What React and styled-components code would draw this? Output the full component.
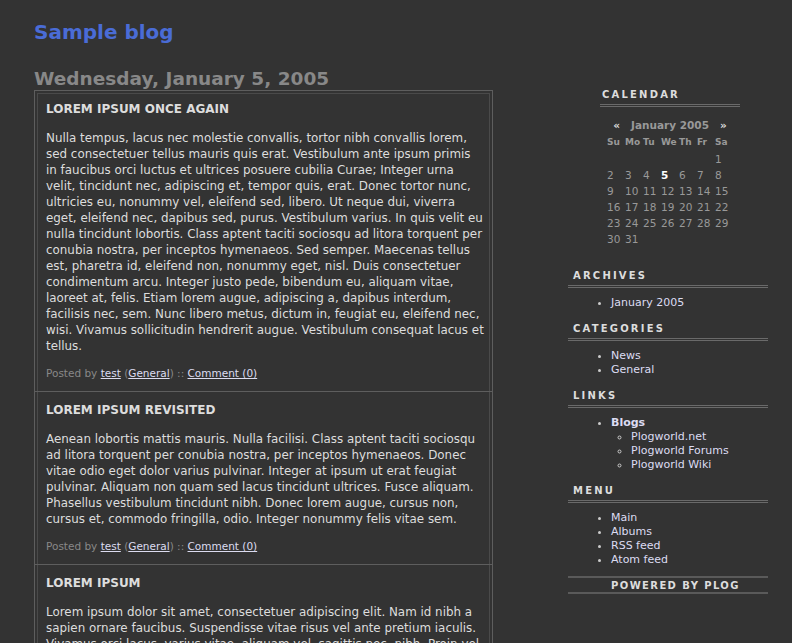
import React from 'react';
import styled, { createGlobalStyle } from 'styled-components';

const GlobalStyle = createGlobalStyle`
  html, body {
    margin: 0;
    padding: 0;
    background: #333333;
  }
  body {
    font-family: 'DejaVu Sans', Verdana, sans-serif;
    color: #dddddd;
  }
`;

const Page = styled.div`
  padding: 18px 0 0 34px;
  width: 734px;
  height: 625px;
  overflow: hidden;
`;

const BlogTitle = styled.h1`
  margin: 0;
  font-size: 20px;
  line-height: 28px;
  font-weight: bold;
  color: #4a6cd6;
`;

const Columns = styled.div`
  display: flex;
  align-items: flex-start;
  gap: 75px;
  margin-top: 22px;
`;

const Main = styled.div`
  width: 459px;
  flex-shrink: 0;
`;

const DateTitle = styled.h2`
  margin: 0;
  font-size: 18.5px;
  line-height: 22px;
  font-weight: bold;
  color: #888888;
`;

const PostList = styled.div`
  border: 1px solid #5e5e5e;
  box-shadow: inset 0 0 0 2px #333, inset 0 0 0 3px #4a4a4a;
`;

const Post = styled.div`
  padding: 10px 8px 10px 11px;
  & + & {
    border-top: 1px solid #5e5e5e;
  }
`;

const PostTitle = styled.h3`
  margin: 0 0 13px;
  font-size: 12px;
  line-height: 16px;
  font-weight: bold;
  text-transform: uppercase;
  color: #dddddd;
`;

const PostBody = styled.p`
  margin: 0 0 11px;
  font-size: 11.9px;
  line-height: 16px;
  color: #dddddd;
`;

const PostMeta = styled.div`
  font-size: 10.5px;
  line-height: 16px;
  color: #888888;
`;

const MetaLink = styled.a`
  color: #dcdcf0;
  text-decoration: underline;
`;

const Sidebar = styled.div`
  width: 200px;
  flex-shrink: 0;
  padding-top: 20px;
`;

const Block = styled.div`
  margin: ${(p) => (p.$narrow ? '0 28px 0 32px' : '22px 0 0')};
`;

const Heading = styled.h4`
  margin: 0;
  padding: 0 0 2px ${(p) => (p.$narrow ? '2px' : '5px')};
  font-size: 10px;
  line-height: 14px;
  font-weight: bold;
  letter-spacing: 2.2px;
  text-transform: uppercase;
  color: #dddddd;
  border-bottom: 3px double #6a6a6a;
`;

const Calendar = styled.table`
  margin: 10px auto 0;
  width: 126px;
  table-layout: fixed;
  border-collapse: collapse;
  font-size: 10.5px;
  color: #999999;
  td, th {
    padding: 0;
    height: 16px;
    text-align: left;
    white-space: nowrap;
  }
  th {
    height: 18px;
    font-size: 9px;
    font-weight: bold;
    color: #999999;
  }
`;

const CalCaption = styled.td`
  text-align: center !important;
  font-weight: bold;
  color: #999999;
`;

const Arrow = styled.span`
  color: #dddddd;
  font-weight: bold;
`;

const Today = styled.td`
  color: #ffffff;
  font-weight: bold;
`;

const LinkList = styled.ul`
  margin: 8px 0 12px;
  padding: 0 0 0 43px;
  font-size: 11px;
  line-height: 14px;
  list-style: disc;
  color: #cccccc;
  ul {
    margin: 0;
    padding-left: 20px;
    list-style: circle;
  }
`;

const Item = styled.li`
  color: #cccccc;
  a {
    color: #dcdcf2;
    text-decoration: none;
    font-weight: ${(p) => (p.$bold ? 'bold' : 'normal')};
  }
  li a {
    font-weight: normal;
  }
`;

const Powered = styled.div`
  margin-top: -3px;
  border-top: 2px solid #5a5a5a;
  border-bottom: 2px solid #5a5a5a;
  padding: 1px 0 0 43px;
  font-size: 10px;
  line-height: 13px;
  font-weight: bold;
  letter-spacing: 1.4px;
  text-transform: uppercase;
  color: #dddddd;
`;

const posts = [
  {
    title: 'Lorem ipsum once again',
    body: 'Nulla tempus, lacus nec molestie convallis, tortor nibh convallis lorem, sed consectetuer tellus mauris quis erat. Vestibulum ante ipsum primis in faucibus orci luctus et ultrices posuere cubilia Curae; Integer urna velit, tincidunt nec, adipiscing et, tempor quis, erat. Donec tortor nunc, ultricies eu, nonummy vel, eleifend sed, libero. Ut neque dui, viverra eget, eleifend nec, dapibus sed, purus. Vestibulum varius. In quis velit eu nulla tincidunt lobortis. Class aptent taciti sociosqu ad litora torquent per conubia nostra, per inceptos hymenaeos. Sed semper. Maecenas tellus est, pharetra id, eleifend non, nonummy eget, nisl. Duis consectetuer condimentum arcu. Integer justo pede, bibendum eu, aliquam vitae, laoreet at, felis. Etiam lorem augue, adipiscing a, dapibus interdum, facilisis nec, sem. Nunc libero metus, dictum in, feugiat eu, eleifend nec, wisi. Vivamus sollicitudin hendrerit augue. Vestibulum consequat lacus et tellus.',
  },
  {
    title: 'Lorem ipsum revisited',
    body: 'Aenean lobortis mattis mauris. Nulla facilisi. Class aptent taciti sociosqu ad litora torquent per conubia nostra, per inceptos hymenaeos. Donec vitae odio eget dolor varius pulvinar. Integer at ipsum ut erat feugiat pulvinar. Aliquam non quam sed lacus tincidunt ultrices. Fusce aliquam. Phasellus vestibulum tincidunt nibh. Donec lorem augue, cursus non, cursus et, commodo fringilla, odio. Integer nonummy felis vitae sem.',
  },
  {
    title: 'Lorem ipsum',
    body: 'Lorem ipsum dolor sit amet, consectetuer adipiscing elit. Nam id nibh a sapien ornare faucibus. Suspendisse vitae risus vel ante pretium iaculis. Vivamus orci lacus, varius vitae, aliquam vel, sagittis nec, nibh. Proin vel lectus. Sed vitae nunc. Donec id urna.',
  },
];

const weeks = [
  ['', '', '', '', '', '', 1],
  [2, 3, 4, 5, 6, 7, 8],
  [9, 10, 11, 12, 13, 14, 15],
  [16, 17, 18, 19, 20, 21, 22],
  [23, 24, 25, 26, 27, 28, 29],
  [30, 31, '', '', '', '', ''],
];

const days = ['Su', 'Mo', 'Tu', 'We', 'Th', 'Fr', 'Sa'];

const App = () => (
  <>
    <GlobalStyle />
    <Page>
      <BlogTitle>Sample blog</BlogTitle>
      <Columns>
        <Main>
          <DateTitle>Wednesday, January 5, 2005</DateTitle>
          <PostList>
            {posts.map((post) => (
              <Post key={post.title}>
                <PostTitle>{post.title}</PostTitle>
                <PostBody>{post.body}</PostBody>
                <PostMeta>
                  Posted by <MetaLink href="#">test</MetaLink> (<MetaLink href="#">General</MetaLink>) :: <MetaLink href="#">Comment (0)</MetaLink>
                </PostMeta>
              </Post>
            ))}
          </PostList>
        </Main>

        <Sidebar>
          <Block $narrow>
            <Heading $narrow>Calendar</Heading>
            <Calendar>
              <tbody>
                <tr>
                  <CalCaption colSpan={7}>
                    <Arrow>«</Arrow>&nbsp;&nbsp;&nbsp;January 2005&nbsp;&nbsp;&nbsp;<Arrow>»</Arrow>
                  </CalCaption>
                </tr>
                <tr>
                  {days.map((d) => (
                    <th key={d}>{d}</th>
                  ))}
                </tr>
                {weeks.map((week, i) => (
                  <tr key={i}>
                    {week.map((d, j) =>
                      d === 5 ? <Today key={j}>{d}</Today> : <td key={j}>{d}</td>
                    )}
                  </tr>
                ))}
              </tbody>
            </Calendar>
          </Block>

          <Block>
            <Heading>Archives</Heading>
            <LinkList>
              <Item><a href="#">January 2005</a></Item>
            </LinkList>
            <Heading>Categories</Heading>
            <LinkList>
              <Item><a href="#">News</a></Item>
              <Item><a href="#">General</a></Item>
            </LinkList>
            <Heading>Links</Heading>
            <LinkList>
              <Item $bold>
                <a href="#">Blogs</a>
                <ul>
                  <Item><a href="#">Plogworld.net</a></Item>
                  <Item><a href="#">Plogworld Forums</a></Item>
                  <Item><a href="#">Plogworld Wiki</a></Item>
                </ul>
              </Item>
            </LinkList>
            <Heading>Menu</Heading>
            <LinkList>
              <Item><a href="#">Main</a></Item>
              <Item><a href="#">Albums</a></Item>
              <Item><a href="#">RSS feed</a></Item>
              <Item><a href="#">Atom feed</a></Item>
            </LinkList>
            <Powered>Powered by Plog</Powered>
          </Block>
        </Sidebar>
      </Columns>
    </Page>
  </>
);

export default App;
